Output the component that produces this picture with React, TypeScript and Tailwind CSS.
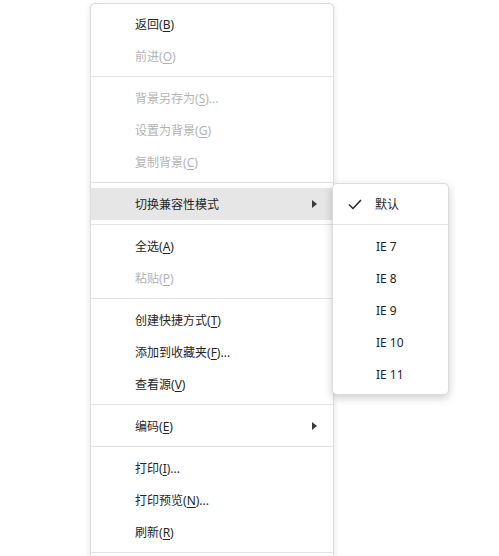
import React from "react";

type Item =
  | { kind: "sep" }
  | {
      kind: "item";
      label: string;
      key: string;
      tail?: string;
      disabled?: boolean;
      sub?: boolean;
      active?: boolean;
    };

const mainItems: Item[] = [
  { kind: "item", label: "返回", key: "B" },
  { kind: "item", label: "前进", key: "O", disabled: true },
  { kind: "sep" },
  { kind: "item", label: "背景另存为", key: "S", tail: "...", disabled: true },
  { kind: "item", label: "设置为背景", key: "G", disabled: true },
  { kind: "item", label: "复制背景", key: "C", disabled: true },
  { kind: "sep" },
  { kind: "item", label: "切换兼容性模式", key: "", sub: true, active: true },
  { kind: "sep" },
  { kind: "item", label: "全选", key: "A" },
  { kind: "item", label: "粘贴", key: "P", disabled: true },
  { kind: "sep" },
  { kind: "item", label: "创建快捷方式", key: "T" },
  { kind: "item", label: "添加到收藏夹", key: "F", tail: "..." },
  { kind: "item", label: "查看源", key: "V" },
  { kind: "sep" },
  { kind: "item", label: "编码", key: "E", sub: true },
  { kind: "sep" },
  { kind: "item", label: "打印", key: "I", tail: "..." },
  { kind: "item", label: "打印预览", key: "N", tail: "..." },
  { kind: "item", label: "刷新", key: "R" },
  { kind: "sep" },
];

const modes = ["IE 7", "IE 8", "IE 9", "IE 10", "IE 11"];

function Separator() {
  return <div className="mt-1 mb-[5px] h-px bg-[#e3e3e3]" />;
}

function Arrow() {
  return (
    <svg width="5" height="8" viewBox="0 0 5 8" className="block">
      <path d="M0 0 L5 4 L0 8 Z" fill="#3a3a3a" />
    </svg>
  );
}

function Check() {
  return (
    <svg width="14" height="11" viewBox="0 0 14 11" className="block">
      <path
        d="M1 5.5 L5 9.5 L13 1"
        fill="none"
        stroke="#2e2e2e"
        strokeWidth="1.6"
        strokeLinejoin="round"
      />
    </svg>
  );
}

function MenuRow({ item }: { item: Extract<Item, { kind: "item" }> }) {
  const color = item.disabled ? "text-[#b3b3b3]" : "text-[#262626]";
  return (
    <div
      className={`flex h-8 items-center pt-[2px] pl-[44px] pr-4 ${color} ${
        item.active ? "bg-[#e6e6e6]" : ""
      }`}
    >
      <span className="whitespace-nowrap">
        {item.label}
        {item.key && (
          <>
            (<span className="underline underline-offset-2">{item.key}</span>)
          </>
        )}
        {item.tail}
      </span>
      {item.sub && (
        <span className="ml-auto -mt-[2px]">
          <Arrow />
        </span>
      )}
    </div>
  );
}

export default function App() {
  return (
    <div
      className="relative h-[556px] w-[499px] overflow-hidden bg-white text-[12px] leading-none"
      style={{ fontFamily: '"Noto Sans", "Noto Sans CJK SC", sans-serif' }}
    >
      {/* page context menu; it runs on past the bottom of the window */}
      <div className="absolute left-[90px] top-[3px] w-[244px] rounded-[5px] border border-[#dcdcdc] bg-white pt-1 pb-10 shadow-[0_2px_6px_rgba(0,0,0,0.12)]">
        {mainItems.map((it, i) =>
          it.kind === "sep" ? <Separator key={i} /> : <MenuRow key={i} item={it} />
        )}
      </div>

      {/* compatibility mode submenu */}
      <div className="absolute left-[332px] top-[183px] w-[117px] rounded-[5px] border border-[#dcdcdc] bg-white py-1 shadow-[0_3px_8px_rgba(0,0,0,0.2)]">
        <div className="flex h-8 items-center pt-[2px] text-[#262626]">
          <span className="-mt-[2px] w-[42px] pl-[15px]">
            <Check />
          </span>
          <span>默认</span>
        </div>
        <Separator />
        {modes.map((m) => (
          <div key={m} className="flex h-8 items-center pt-[2px] pl-[43px] text-[#262626]">
            {m}
          </div>
        ))}
      </div>
    </div>
  );
}
